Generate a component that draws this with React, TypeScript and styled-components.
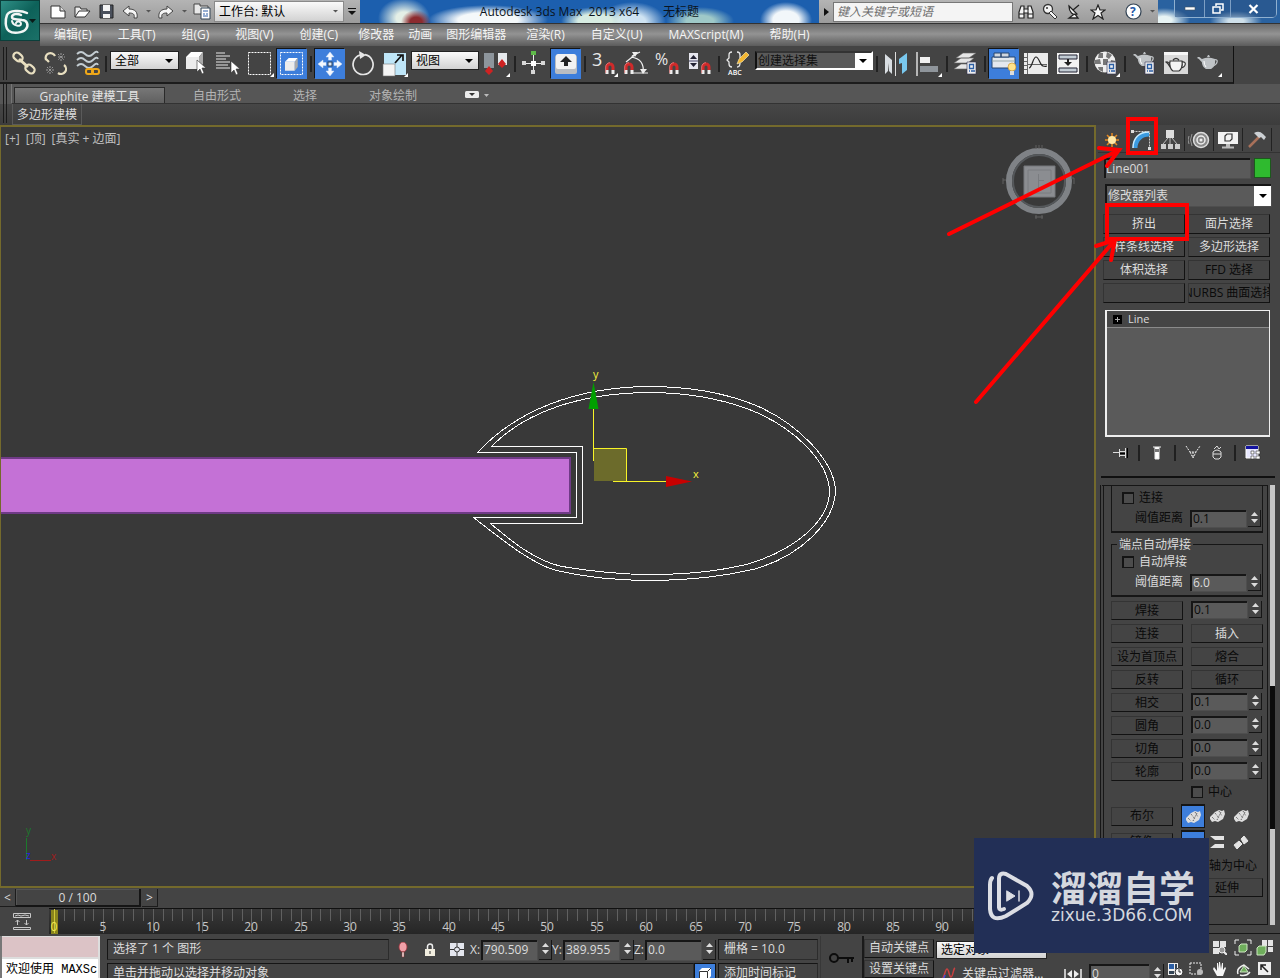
import React, { ReactNode } from "react";
import styled, { createGlobalStyle, css } from "styled-components";

const Global = createGlobalStyle`
  *, *::before, *::after { box-sizing: border-box; }
  body { margin: 0; background: #444; }
  body, button, input, select {
    font-family: "Open Sans", "Noto Sans CJK SC", sans-serif;
    font-size: 12px;
    line-height: 16px;
  }
  button, input, select, fieldset, legend { margin: 0; padding: 0; border: 0; border-radius: 0; min-width: 0; }
  button { background: none; color: inherit; }
  select { appearance: none; background: none; outline: none; }
  svg { display: block; flex: none; }
`;

const INK = "#dcdcdc";
const DIM = "#0a0a0a";
const BLUE = "#3d7edb";

/* ---------- page frame ---------- */

const App = styled.div`
  position: relative;
  display: flex;
  flex-direction: column;
  height: 100vh;
  overflow: hidden;
  background: #444;
  color: ${INK};
  white-space: nowrap;
`;

const Header = styled.header`
  display: flex;
  flex: none;
`;

const AppButton = styled.button`
  flex: none;
  width: 40px;
  height: 41px;
  background: linear-gradient(135deg, #2f8f86, #0d6159 50%, #1b7168);
  border: 1px solid #0b3f3b;
  margin-bottom: -2px;
`;

const HeaderRows = styled.div`
  flex: 1;
  min-width: 0;
`;

const TitleBar = styled.div`
  display: flex;
  align-items: stretch;
  height: 24px;
  border-bottom: 1px solid #333;
`;

const QuickBar = styled.div<{ $pad?: number }>`
  display: flex;
  align-items: center;
  flex: none;
  height: 23px;
  padding-left: ${(p) => p.$pad ?? 0}px;
  background: linear-gradient(#b4b4b4, #9b9b9b);
`;

const QuickButton = styled.button<{ $w?: number }>`
  display: flex;
  align-items: center;
  justify-content: center;
  width: ${(p) => p.$w ?? 24}px;
  height: 22px;
`;

const Picker = styled.label<{ $w: number; $h: number; $flat?: boolean }>`
  display: flex;
  align-items: center;
  flex: none;
  width: ${(p) => p.$w}px;
  height: ${(p) => p.$h}px;
  padding: 0 5px 0 4px;
  color: #000;
  background: linear-gradient(#fafafa, #d2d2d2);
  border: 1px solid ${(p) => (p.$flat ? "#8a8a8a" : "#222")};
  select { flex: 1; height: 100%; color: #000; }
`;

const Caption = styled.div`
  display: flex;
  flex: 1;
  align-items: center;
  justify-content: center;
  gap: 24px;
  color: #0b1420;
  background:
    radial-gradient(ellipse 15px 12px at 56px 22px, #8c2b2f 40%, transparent),
    radial-gradient(ellipse 26px 20px at 44px 18px, #e4efe6 30%, transparent),
    radial-gradient(ellipse 60px 15px at 128px 20px, #f4f8fa 50%, transparent),
    radial-gradient(ellipse 34px 14px at 235px 21px, #d7ece2 50%, transparent),
    radial-gradient(ellipse 34px 20px at 272px 22px, #cfe3f2 40%, transparent),
    radial-gradient(ellipse 34px 14px at 340px 21px, #9fc9c8 40%, transparent),
    radial-gradient(ellipse 26px 18px at 426px 20px, #f2f7fa 50%, transparent),
    #1c5fae;
  span { white-space: pre; }
`;

const SearchBox = styled.input`
  width: 180px;
  height: 20px;
  padding: 0 3px;
  margin-right: 1px;
  background: #f4f4f4;
  border: 1px solid #777;
  font-style: italic;
  &::placeholder { color: #6c6c6c; opacity: 1; }
`;

const WindowArea = styled.div`
  flex: none;
  width: 122px;
  padding-left: 16px;
  background:
    radial-gradient(ellipse 26px 12px at 6px 20px, #e8f4f4 30%, transparent),
    radial-gradient(ellipse 26px 10px at 78px 21px, #cfe0ea 30%, transparent),
    #2a62a0;
`;

const WindowButtons = styled.div`
  display: flex;
  width: 103px;
  height: 18px;
  border: 1px solid #8fb0d0;
  border-top: 0;
  border-radius: 0 0 5px 5px;
`;

const WindowButton = styled.button<{ $w: number }>`
  display: flex;
  align-items: center;
  justify-content: center;
  width: ${(p) => p.$w}px;
  background: rgba(40, 80, 130, 0.5);
  & + & { border-left: 1px solid #7d9fc4; }
`;

const MenuBar = styled.nav`
  display: flex;
  height: 22px;
  padding-left: 1px;
  background: linear-gradient(#6a6a6a, #939393 45%, #5c5c5c);
`;

const MenuItem = styled.button<{ $tight?: boolean }>`
  padding: 0 ${(p) => (p.$tight ? 7 : 13)}px;
  color: #f4f4f4;
`;

/* ---------- main toolbar ---------- */

const Toolbar = styled.div`
  display: flex;
  flex: none;
  align-items: center;
  width: 1234px;
  height: 38px;
  padding-bottom: 1px;
  border-right: 1px solid #111;
  border-bottom: 2px solid #1c1c1c;
`;

const Grip = styled.div<{ $h: number }>`
  flex: none;
  width: 4px;
  height: ${(p) => p.$h}px;
  margin-left: 3px;
  border: solid #1a1a1a;
  border-width: 0 1px;
`;

const Tool = styled.button<{ $on?: boolean }>`
  flex: none;
  width: 30px;
  height: 30px;
  margin: 0 1px;
  ${(p) => p.$on && css`background: ${BLUE}; box-shadow: -1px -1px #151515;`}
  svg { margin: -1px; }
`;

const ToolSep = styled.div`
  flex: none;
  width: 2px;
  height: 16px;
  margin: 0 2px;
  background: #222;
`;

const ToolSlot = styled.div`
  flex: none;
  align-self: flex-start;
  padding: 5px 1px 0;
`;

const SetPicker = styled.label`
  display: flex;
  width: 118px;
  height: 19px;
  border: 2px solid #fff;
  border-top-color: #333;
  border-left-color: #111;
  background: #5a5a5a;
  align-items: center;
  input { width: 98px; height: 15px; padding-left: 1px; background: #5a5a5a; color: #111; }
  input::placeholder { color: #111; opacity: 1; }
  button { flex: 1; height: 15px; background: #fff; display: flex; align-items: center; justify-content: center; }
`;

/* ---------- ribbon ---------- */

const Ribbon = styled.div`
  display: flex;
  flex: none;
  height: 41px;
  background: linear-gradient(#565656 0 20px, #474747 20px, #3c3c3c);
`;

const RibbonBody = styled.div`
  flex: 1;
  margin-left: 4px;
`;

const RibbonTabs = styled.div`
  display: flex;
  height: 20px;
  padding: 3px 0 0 2px;
  border-bottom: 1px solid #333;
  border-left: 1px solid #777;
`;

const RibbonTab = styled.button<{ $w: number; $on?: boolean }>`
  width: ${(p) => p.$w}px;
  padding-top: 2px;
  line-height: 14px;
  color: #b4b4b4;
  ${(p) => p.$on && css`
    color: #e4e4e4;
    background: linear-gradient(#777, #606060);
    border: solid #2a2a2a;
    border-width: 1px 1px 0;
  `}
`;

const RibbonMin = styled.button`
  display: flex;
  align-items: center;
  padding-left: 20px;
`;

const RibbonPanelButton = styled.button`
  height: 21px;
  padding: 2px 4px 0;
  border: 1px solid #5a5a5a;
  border-top: 0;
  margin-left: 1px;
`;

/* ---------- work area ---------- */

const Body = styled.div`
  display: flex;
  flex: 1;
  min-height: 0;
`;

const Stage = styled.div`
  display: flex;
  flex: 1;
  flex-direction: column;
  min-width: 0;
`;

const Viewport = styled.main`
  position: relative;
  flex: 1;
  min-height: 0;
  margin-right: 2px;
  background: #393939;
  border: 2px solid #746a2c;
  border-left-width: 1px;
  overflow: hidden;
`;

const Scene = styled.svg`
  width: 100%;
  height: 100%;
  font-family: "Open Sans", sans-serif;
`;

const ViewLabels = styled.div`
  position: absolute;
  top: 4px;
  left: 4px;
  display: flex;
  gap: 6px;
  button { color: #c0c0c0; }
`;

const ViewCube = styled.svg`
  position: absolute;
  top: 12px;
  right: 18px;
`;

const SliderRow = styled.div`
  display: flex;
  flex: none;
  height: 20px;
  padding-top: 1px;
`;

const StepButton = styled.button`
  width: 16px;
  height: 18px;
  border-right: 1px solid #1c1c1c;
  border-bottom: 1px solid #1c1c1c;
`;

const TimeSlider = styled.button`
  width: 125px;
  height: 18px;
  padding-top: 1px;
  margin-right: 1px;
  border: solid #151515;
  border-width: 0 2px 2px 0;
  box-shadow: inset 1px 1px #555;
`;

const TrackRow = styled.div`
  display: flex;
  flex: none;
  height: 26px;
`;

const TrackToggle = styled.button`
  display: flex;
  align-items: center;
  justify-content: center;
  flex: none;
  width: 44px;
  margin-right: 5px;
`;

const Track = styled.div`
  flex: 1;
  min-width: 0;
  border-top: 1px solid #111;
  background: linear-gradient(#383838, #262626);
  overflow: hidden;
  text { font-size: 12px; fill: #c8c8c8; text-anchor: middle; }
`;

/* ---------- command panel ---------- */

const Panel = styled.aside`
  display: flex;
  flex: none;
  flex-direction: column;
  width: 182px;
  border-bottom: 1px solid #161616;
`;

const PanelTabs = styled.div`
  display: flex;
  height: 28px;
  padding-top: 3px;
  border-bottom: 1px solid #333;
`;

const PanelTab = styled.button`
  display: flex;
  align-items: center;
  justify-content: center;
  width: 29px;
  height: 23px;
  border-right: 1px solid #222;
`;

const NameRow = styled.div`
  display: flex;
  gap: 4px;
  padding: 5px 9px 6px 6px;
`;

const sunken = css`
  background: #5a5a5a;
  border: solid #161616;
  border-width: 2px 0 0 2px;
  box-shadow: 1px 1px #4e4e4e;
`;

const NameInput = styled.input`
  ${sunken}
  flex: 1;
  height: 20px;
  padding-bottom: 2px;
  color: ${INK};
`;

const Swatch = styled.button`
  width: 17px;
  height: 20px;
  background: #2fba2f;
  border: 1px solid #1c5a1c;
`;

const ModifierPicker = styled.label`
  ${sunken}
  display: flex;
  align-items: center;
  height: 22px;
  margin: 0 9px 8px 7px;
  select { flex: 1; height: 20px; padding-left: 1px; color: ${INK}; }
  span { display: flex; align-items: center; justify-content: center; width: 17px; height: 20px; background: #fff; }
`;

const ModifierGrid = styled.div`
  display: grid;
  grid-template-columns: 1fr 1fr;
  gap: 3px;
  margin: 0 10px 7px 5px;
`;

const PlateButton = styled.button<{ $h?: number; $dim?: boolean; $w?: number }>`
  display: flex;
  align-items: center;
  justify-content: center;
  width: ${(p) => (p.$w ? p.$w + "px" : "auto")};
  height: ${(p) => p.$h ?? 19}px;
  overflow: hidden;
  color: ${(p) => (p.$dim ? DIM : INK)};
  border: 1px solid #343434;
  border-right-color: #121212;
  border-bottom-color: #121212;
`;

const StackList = styled.div`
  flex: none;
  height: 127px;
  margin: 0 10px 0 7px;
  border: 2px solid #eee;
  border-width: 1px 1px 2px 2px;
  background: #5a5a5a;
`;

const StackItem = styled.button`
  display: flex;
  align-items: center;
  gap: 6px;
  width: 100%;
  height: 17px;
  padding-left: 6px;
  font-size: 11px;
  background: #454545;
  border-bottom: 1px solid #8a8a8a;
`;

const StackTools = styled.div`
  display: flex;
  align-items: center;
  height: 31px;
  padding-left: 11px;
`;

const StackTool = styled.button`
  display: flex;
  align-items: center;
  justify-content: center;
  width: 24px;
  height: 20px;
`;

const StackSep = styled.div`
  width: 2px;
  height: 16px;
  margin: 0 5px;
  background: #202020;
`;

const PanelRule = styled.div`
  flex: none;
  height: 2px;
  margin: 8px 5px 7px 3px;
  background: #101010;
`;

const RollupArea = styled.div`
  display: flex;
  flex: 1;
  gap: 2px;
  min-height: 0;
  margin: 0 5px 8px 2px;
`;

const Rollup = styled.div`
  flex: 1;
  overflow: hidden;
  border: 1px solid #161616;
  border-left: 4px double #161616;
  padding: 0 4px 0 7px;
`;

const ScrollTrack = styled.div`
  display: flex;
  flex-direction: column;
  width: 5px;
  background: #c8c8c8;
  padding-top: 201px;
  &::after { content: ""; height: 143px; background: #0c0c0c; }
`;

const Scrolled = styled.div`
  display: flex;
  flex-direction: column;
  gap: 4px;
  margin-top: -13px;
`;

const Group = styled.fieldset`
  height: 60px;
  padding: 1px 1px 3px 10px;
  border: 1px solid #161616;
  border-bottom-width: 2px;
`;

const GroupTitle = styled.legend<{ $dim?: boolean }>`
  height: 14px;
  line-height: 16px;
  padding: 0 2px;
  margin-left: -5px;
  color: ${(p) => (p.$dim ? DIM : INK)};
`;

const Check = styled.label<{ $dim?: boolean }>`
  display: flex;
  align-items: center;
  gap: 5px;
  height: 20px;
  color: ${(p) => (p.$dim ? DIM : INK)};
  input {
    appearance: none;
    width: 12px;
    height: 12px;
    border: solid #141414;
    border-width: 2px 1px 1px 2px;
    background: #4c4c4c;
  }
`;

const AxisCaption = styled.div`
  height: 20px;
  padding: 2px 0 0 86px;
  color: ${DIM};
`;

const DistanceRow = styled.div<{ $dim?: boolean }>`
  display: flex;
  align-items: center;
  justify-content: flex-end;
  gap: 7px;
  height: 20px;
  color: ${(p) => (p.$dim ? DIM : INK)};
`;

const Pair = styled.div`
  display: grid;
  grid-template-columns: 72px 72px;
  gap: 8px;
  color: ${DIM};
`;

const Lower = styled.div`
  display: flex;
  flex-direction: column;
  gap: 2px;
  margin-top: -3px;
`;

const Indent = styled.div`
  padding-left: 80px;
`;

const IconRow = styled.div`
  display: flex;
  align-items: center;
  height: 24px;
`;

const ShapeButton = styled.button<{ $on?: boolean }>`
  display: flex;
  align-items: center;
  justify-content: center;
  width: 24px;
  height: 24px;
  ${(p) => p.$on && css`margin-left: 8px; background: ${BLUE}; border: solid #151515; border-width: 2px 1px 1px;`}
`;

const Field = styled.span<{ $w: number; $h: number }>`
  display: flex;
  gap: 2px;
  height: ${(p) => p.$h}px;
  input { ${sunken} width: ${(p) => p.$w}px; height: 100%; padding: 0 0 2px 1px; color: inherit; }
`;

const Arrows = styled.span`
  display: flex;
  flex-direction: column;
  justify-content: center;
  gap: 2px;
  width: 13px;
  height: 100%;
  border: solid #161616;
  border-width: 0 1px 1px 0;
  button { display: flex; justify-content: center; height: 5px; }
`;

/* ---------- status bar ---------- */

const Status = styled.footer`
  display: flex;
  flex: none;
  height: 44px;
  overflow: hidden;
  padding-top: 2px;
`;

const Listener = styled.div`
  flex: none;
  width: 100px;
  height: 46px;
  border-left: 2px solid #777;
  border-right: 2px solid #ddd;
  font-family: "Liberation Mono", "Noto Sans CJK SC", monospace;
  div { height: 23px; border: solid #ddd; border-width: 1px 0 2px; background: #dcc3c6; }
  p { margin: 0; height: 23px; padding: 3px 4px 0; background: #fff; color: #000; overflow: hidden; }
`;

const StatusCol = styled.div<{ $w?: number; $ml?: number }>`
  display: flex;
  flex-direction: column;
  flex: ${(p) => (p.$w ? "none" : 1)};
  gap: 3px;
  width: ${(p) => (p.$w ? p.$w + "px" : "auto")};
  margin-left: ${(p) => p.$ml ?? 3}px;
  padding-top: 3px;
`;

const StatusRow = styled.div<{ $end?: boolean }>`
  display: flex;
  flex: none;
  align-items: center;
  justify-content: ${(p) => (p.$end ? "flex-end" : "flex-start")};
  height: 21px;
`;

const StatusBox = styled.div`
  flex: 1;
  height: 21px;
  padding: 1px 5px;
  border: 1px solid #2c2c2c;
  border-top-color: #151515;
  border-left-color: #151515;
`;

const StatusIcon = styled.button<{ $w: number; $on?: boolean }>`
  display: flex;
  align-items: center;
  justify-content: center;
  flex: none;
  width: ${(p) => p.$w}px;
  height: 21px;
  ${(p) => p.$on && css`background: ${BLUE}; border: 1px solid #111;`}
`;

const Axis = styled.label`
  display: flex;
  align-items: center;
  justify-content: space-between;
  width: 82px;
`;

const KeyButton = styled.button`
  display: flex;
  align-items: center;
  justify-content: center;
  flex: none;
  width: 44px;
  height: 44px;
  margin-left: 2px;
  border-right: 2px solid #1a1a1a;
  border-left: 1px solid #383838;
`;

const KeyModes = styled.div`
  display: flex;
  flex-direction: column;
  flex: none;
  gap: 2px;
  width: 72px;
  padding: 3px 2px 0 0;
`;

const NavTools = styled.div`
  display: grid;
  grid-template-columns: 20px 20px 26px 22px 22px;
  grid-auto-rows: 22px;
  place-items: center;
  flex: none;
  width: 116px;
  padding-left: 2px;
`;

/* ---------- overlays ---------- */

const Markup = styled.svg`
  position: absolute;
  top: 110px;
  right: 0;
  pointer-events: none;
`;

const Watermark = styled.div`
  position: absolute;
  right: 71px;
  bottom: 25px;
  display: flex;
  align-items: center;
  gap: 16px;
  width: 235px;
  height: 115px;
  padding-left: 13px;
  background: #222f56;
  color: #d4d7de;
`;

const Brand = styled.div`
  font-size: 36px;
  line-height: 38px;
  font-weight: 700;
  font-family: "Noto Sans CJK SC", sans-serif;
`;

const Site = styled.div`
  font: 17px/20px "DejaVu Sans", sans-serif;
`;

/* ---------- drawings ---------- */

const Down = ({ c = "#000", s = 8 }: { c?: string; s?: number }) => (
  <svg width={s} height={s / 2} viewBox="0 0 8 4"><path d="M0 0h8L4 4z" fill={c} /></svg>
);

const Flyout = () => <path d="M30 25v4h-4z" fill="#fff" />;
const Cursor = ({ x, y }: { x: number; y: number }) => (
  <path transform={`translate(${x} ${y})`} d="M0 0v12l3-3 2 5 2-1-2-5h4z" fill="#fff" stroke="#333" strokeWidth=".6" />
);
const Magnet = ({ x = 14, y = 14 }: { x?: number; y?: number }) => (
  <g transform={`translate(${x} ${y})`} fill="none" strokeWidth="3">
    <path d="M2 8V5a3 3 0 0 1 6 0v3" stroke="#d02a2a" />
    <path d="M2 8v4M8 8v4" stroke="#eee" />
    <path d="M.7 11V5a4.300 4.300 0 0 1 4.300-4.300" stroke="#f08080" strokeWidth=".8" />
  </g>
);
const Teapot = ({ x, y, c = "#bfc3c6" }: { x: number; y: number; c?: string }) => (
  <g transform={`translate(${x} ${y})`}>
    <path d="M5 5c-1 6 2 9 4 10h5c2-1 5-4 4-10z" fill={c} />
    <path d="M5 8C4 8 3 5 0 4l1-1c3 0 3 2 5 3zM5 5q6-3 13 0M10 3h3l-1-2h-1z" fill={c} />
    <path d="M17 6c5-2 4 5-2 6" fill="none" stroke={c} strokeWidth="1.300" />
    <path d="M7 7q0 4 2 6" stroke="#fff" fill="none" />
  </g>
);
const Sheet = ({ x, y }: { x: number; y: number }) => (
  <g transform={`translate(${x} ${y})`}>
    <path d="M0 0h9v12H0z" fill="#eee" stroke="#335" strokeWidth=".6" />
    <path d="M2.500 2.500h4v4h-4zM2 9h1M4 9h4" stroke="#2c5fa6" strokeWidth="1.300" fill="none" />
  </g>
);
const Cube = ({ x, y, s = 1 }: { x: number; y: number; s?: number }) => (
  <g transform={`translate(${x} ${y}) scale(${s})`}>
    <path d="M0 5l5-5h12l-4 5z" fill="#fff" />
    <path d="M0 5h13v12H0z" fill="#ececec" />
    <path d="M13 5l4-5v12l-4 5z" fill="#aaa" />
  </g>
);

const Icon = ({ children }: { children: ReactNode }) => (
  <svg width="32" height="32" viewBox="0 0 32 32" fill="none">{children}</svg>
);

const icons: Record<string, ReactNode> = {
  link: <g stroke="#e8dfc0" strokeWidth="2.200"><rect x="6" y="5.500" width="10" height="7" rx="3.500" transform="rotate(40 11 9)" /><rect x="18" y="17.500" width="10" height="7" rx="3.500" transform="rotate(40 23 21)" /><path d="M12 11l9 8" strokeWidth="3" /></g>,
  unlink: <><g stroke="#e8dfc0" strokeWidth="2.200"><path d="M7 12a4.500 4.500 0 1 1 9-4M7 11l3 3" /><path d="M25 17a4.500 4.500 0 1 1-6 8" /></g><path d="M19 6l6 6M25 6l-6 6M19 9h7M22 5v8M8 19l6 6M14 19l-6 6M7 22h8M11 18v8" stroke="#9a9a9a" strokeDasharray="2 1" /></>,
  bind: <><path d="M6 6q4-4 8 0t8 0 5-1M6 12q4-4 8 0t8 0 5-1M6 18q4-4 8 0t8 0 5-1" stroke="#c4cdd2" strokeWidth="1.800" /><g stroke="#f0a818" strokeWidth="2"><rect x="15" y="21" width="7" height="5" rx="2" /><rect x="21" y="21" width="7" height="5" rx="2" /></g></>,
  pick: <><Cube x={6} y={4} /><Cursor x={17} y={12} /></>,
  list: <><path d="M4 5h9M4 8h14M4 11h10M4 14h14M4 17h12M4 20h14" stroke="#e8e8e8" strokeWidth="1.200" /><Cursor x={19} y={13} /></>,
  region: <><rect x="4.500" y="4.500" width="22" height="22" stroke="#fff" strokeDasharray="2 1" /><Flyout /></>,
  window: <><rect x="4.500" y="4.500" width="22" height="22" stroke="#fff" strokeDasharray="2 1" /><Cube x={9} y={10} s={0.75} /></>,
  move: <><path d="M16 4l4 5h-2.500v3h-3V9H12zM16 28l4-5h-2.500v-3h-3v3H12zM4 16l5-4v2.500h3v3H9V20zM28 16l-5-4v2.500h-3v3h3V20z" fill="#f4f8ff" stroke="#cfe0f6" strokeWidth=".5" /><rect x="14" y="14" width="4" height="4" fill="#dfe8f4" stroke="#28415f" /></>,
  rotate: <><path d="M14 7a10 10 0 1 0 5-.3" stroke="#e6e6e6" strokeWidth="1.700" /><path d="M13 3l7 4-6 4z" fill="#e6e6e6" /></>,
  scale: <><path d="M6 5h22v22H6z" fill="#bfe6f8" /><path d="M5 16h12v12H5z" fill="#f4f4f4" stroke="#777" strokeWidth=".6" /><path d="M17 15l7-8M19 7h6v6" stroke="#111" strokeWidth="1.700" /><Flyout /></>,
  pivot: <><path d="M4 5h10v15H4z" fill="#8d959c" /><path d="M18 5h9v12h-9z" fill="#e6e9ec" /><path d="M9 18l4 5-4 4-4-4zM22 11l4 5-4 4-4-4z" fill="#cf2222" /><path d="M18 5h9v6h-9z" fill="#e6e9ec" /><Flyout /></>,
  manip: <><path d="M15.500 5v21M5 15.500h21" stroke="#eee" /><path d="M13 3h5v4h-5z" fill="#5fb94a" /><path d="M13 22h4v4h-4zM4 13h4v4H4zM23 13h4v4h-4z" fill="#d8d8d8" /><path d="M13 13h5v5h-5z" fill="#fff" /></>,
  keyboard: <><rect x="5" y="7" width="22" height="19" rx="2" fill="#b9bdc2" /><rect x="6" y="6" width="20" height="15" rx="2" fill="#f2f2f2" /><path d="M16 8l6 6h-4v4h-4v-4h-4z" fill="#222" /></>,
  snap3: <><text x="4" y="18" fontSize="18" fill="#e8e8e8">3</text><Magnet x={17} y={14} /><Flyout /></>,
  angle: <><path d="M6 14L16 6M11 9q14 2 12 16M12 25h16M20 4l-8 4" stroke="#eee" strokeWidth="1.200" /><path d="M20 21h7l-4 5zM12 4l6 0-3 5z" fill="#eee" /><Magnet x={4} y={14} /></>,
  percent: <><text x="3" y="17" fontSize="16" fill="#e8e8e8">%</text><Magnet x={17} y={14} /></>,
  spin: <><path d="M5 5h9v16H5z" fill="#e6e6ee" /><path d="M6 11l3.500-4L13 11zM6 15l3.500 4 3.500-4z" fill="#223" /><path d="M5 13h9" stroke="#446" /><Magnet x={17} y={14} /></>,
  named: <><path d="M10 4q-3 0-3 3v3l-2 2 2 2v2q0 3 3 3M15 4q3 0 3 3v3M15 19q3 0 3-4" stroke="#e8e8e8" strokeWidth="1.300" /><path d="M15 16l2-5 7-7 3 3-7 7z" fill="#f2b632" stroke="#fff0c0" strokeWidth=".6" /><text x="6" y="27" fontSize="7" fontWeight="600" fill="#fff">ABC</text></>,
  mirror: <><path d="M5 6l7 6v14l-3-3v-8l-1 8-3 3z" fill="#d9dee2" /><path d="M27 5l-8 6v5l3-1v11l5-4z" fill="#79c8ee" /><path d="M15.500 4v24" stroke="#ddd" /></>,
  align: <><path d="M5 4v24" stroke="#ddd" strokeWidth="1.500" /><path d="M8 9h10v6H8z" fill="#f0f0f0" /><path d="M8 18h18v6H8z" fill="#8f959b" /><Flyout /></>,
  layers: <><path d="M4 21l7-5h13l-6 5zM4 15l7-5h13l-6 5zM6 10l7-5h13l-7 5z" fill="#e6e6e6" stroke="#666" strokeWidth=".6" /><Sheet x={17} y={14} /></>,
  ribbon: <><path d="M4 9h23v11H4z" fill="#e3e8ee" stroke="#27446f" /><path d="M6 5h7v4H6zM13 5h8v4h-8z" fill="#cfd6df" stroke="#27446f" /><path d="M4 13h23" stroke="#9aa" /><circle cx="24" cy="19" r="4" fill="#ffe28a" stroke="#c98a1a" strokeWidth=".6" /><path d="M22 23h4v4h-4z" fill="#ddd" /></>,
  curve: <><path d="M4 5h24v21H4z" fill="#ececec" /><path d="M7.500 5v21M4 9.500h3M4 13.500h3M4 17.500h3M4 21.500h3M8 16.500h19" stroke="#666" /><path d="M9 20c3 0 4-11 7-11s4 8 7 9 3 0 4 0" stroke="#222" strokeWidth="1.200" /></>,
  schematic: <><path d="M5 5h22v21H5z" fill="#f2f2f2" /><path d="M7 7h18v4H7zM7 20h18v4H7z" stroke="#223" fill="#c2ccd4" /><path d="M16 11v5" stroke="#222" strokeWidth="2" /><path d="M12 14h8l-4 4z" fill="#222" /></>,
  material: <><circle cx="15" cy="14" r="10.500" fill="#efefef" /><path d="M9 5h4v5H8zM17 4l5 3-3 4-3-2zM5 12l5-1 1 5H5zM13 11l5 0 0 6h-5zM21 12l5 1-1 5-5-1zM8 19h5v5l-4-2zM17 19l4 0-1 5h-3z" fill="#777" /><Sheet x={17} y={14} /><Flyout /></>,
  setup: <><Teapot x={5} y={3} /><Sheet x={17} y={14} /></>,
  frame: <><path d="M4 4h24v22H4z" fill="#d9d9d9" /><path d="M4 4h24v3H4z" fill="#f6f6f6" /><g stroke="#333" strokeWidth="1.200" fill="#f4f4f4"><path d="M10 13c-1 5 1 9 3 10h6c2-1 4-5 3-10zM10 16q-2-3-4-2 2 1 4 5M22 14c5-1 4 5-1 6M13 12q3-3 6 0" /></g></>,
  render: <><Teapot x={5} y={6} /><Flyout /></>,
};

const T = ({ n, label, on }: { n: string; label: string; on?: boolean }) => (
  <Tool $on={on} aria-label={label}><Icon>{icons[n]}</Icon></Tool>
);

const Num = ({ label, value, w = 56, h = 17 }: { label: string; value: string; w?: number; h?: number }) => (
  <Field $w={w} $h={h}>
    <input aria-label={label} defaultValue={value} />
    <Arrows>
      <button aria-label={`${label} +`}><svg width="7" height="4"><path d="M0 4h7L3.500 0z" fill="#ddd" /></svg></button>
      <button aria-label={`${label} -`}><svg width="7" height="4"><path d="M0 0h7L3.500 4z" fill="#ddd" /></svg></button>
    </Arrows>
  </Field>
);

const Union = () => (
  <svg width="18" height="16" viewBox="0 0 18 16"><path d="M2 9l5-5 4-2 3 1 2-1 1 4-2 5-5 3-3-1-3 1-2-3z" fill="#dedede" /><path d="M4 9l3 3M7 5l4 5M11 3l3 5M9 12l4-8" stroke="#555" strokeDasharray="1 1" /></svg>
);

const menus = ["编辑(E)", "工具(T)", "组(G)", "视图(V)", "创建(C)", "修改器", "动画", "图形编辑器", "渲染(R)", "自定义(U)", "MAXScript(M)", "帮助(H)"];
const tightMenus = ["修改器", "动画", "图形编辑器"];
const modifiers: [string, boolean][] = [
  ["挤出", false], ["面片选择", false], ["样条线选择", false], ["多边形选择", false],
  ["体积选择", false], ["FFD 选择", true], ["", true], ["NURBS 曲面选择", true],
];
const frameX = (f: number) => 5 + Math.round(f * 9.87);

const HeaderBar = () => (
  <Header>
    <AppButton aria-label="应用程序">
      <svg width="38" height="38" viewBox="0 0 38 38" fill="none">
        <path d="M26 11c-6-3-18-3-20 2s-2 13 2 16 14 2 17-2 1-9-4-9c-6-1-10 0-10-3s5-4 9-2" stroke="#f2f6f5" strokeWidth="2.500" strokeLinecap="round" />
        <path d="M11 19c1 5 9 6 9 3s-4-3-5-1" stroke="#f2f6f5" strokeWidth="2" strokeLinecap="round" />
        <path d="M28 17h7l-3.500 4z" fill="#0a1a18" />
      </svg>
    </AppButton>
    <HeaderRows>
      <TitleBar>
        <QuickBar $pad={6}>
          <QuickButton aria-label="新建"><svg width="17" height="14"><path d="M1 1h9l5 5v7H1z" fill="#fff" stroke="#333" /><path d="M10 1v5h5" fill="#ddd" stroke="#333" /></svg></QuickButton>
          <QuickButton aria-label="打开"><svg width="18" height="14"><path d="M2 12V2h5l1 2h6v3" fill="#eee" stroke="#333" /><path d="M2 12l4-6h11l-5 6z" fill="#fff" stroke="#333" /></svg></QuickButton>
          <QuickButton aria-label="保存"><svg width="15" height="15"><path d="M1 1h13v13H1z" fill="#4a505c" stroke="#222" /><path d="M4 1h7v6H4zM4 10h7v4H4z" fill="#f4f4f4" /></svg></QuickButton>
          <QuickButton aria-label="撤消"><svg width="17" height="14"><path d="M1 6l6-5v3c6 0 9 3 8 9h-3c1-4-1-5-5-5v3z" fill="#f6f6f6" stroke="#444" /></svg></QuickButton>
          <QuickButton $w={12} aria-label="撤消列表"><Down c="#555" s={5} /></QuickButton>
          <QuickButton aria-label="重做"><svg width="17" height="14"><path d="M15 6L9 1v3C3 4 0 7 1 13h3c-1-4 1-5 5-5v3z" fill="#f6f6f6" stroke="#444" /></svg></QuickButton>
          <QuickButton $w={12} aria-label="重做列表"><Down c="#555" s={5} /></QuickButton>
          <QuickButton aria-label="项目文件夹"><svg width="18" height="17"><path d="M1 1h6v2h8v8H1z" fill="#e8e8e8" stroke="#444" /><path d="M8 5h9v11H8z" fill="#fff" stroke="#345" /><path d="M10 8h5M10 11h2M13 11h2M10 13h5" stroke="#2c5fa6" /></svg></QuickButton>
          <Picker $w={130} $h={21} $flat>
            <select aria-label="工作台"><option>工作台: 默认</option></select><Down c="#555" s={5} />
          </Picker>
          <QuickButton $w={16} aria-label="自定义工具栏"><svg width="8" height="7"><path d="M0 0h8v1H0zM0 3h8L4 7z" fill="#111" /></svg></QuickButton>
        </QuickBar>
        <Caption><span>Autodesk 3ds Max  2013 x64</span><span>无标题</span></Caption>
        <QuickBar>
          <QuickButton $w={14} aria-label="展开"><svg width="5" height="8"><path d="M0 0v8l5-4z" fill="#111" /></svg></QuickButton>
          <SearchBox aria-label="搜索" placeholder="键入关键字或短语" />
          <QuickButton aria-label="查找"><svg width="16" height="16"><path d="M3 2h3v3h4V2h3l2 6v6h-5V9H6v5H1V8z" fill="#f4f4f4" stroke="#222" strokeWidth="1.200" /><path d="M1 10h5M10 10h5M6 5v4M10 5v4" stroke="#222" /></svg></QuickButton>
          <QuickButton aria-label="密钥"><svg width="17" height="17"><circle cx="6" cy="6" r="4.500" fill="#f4f4f4" stroke="#333" strokeWidth="1.300" /><path d="M9 8l6 6-2 2-6-6z" fill="#f4f4f4" stroke="#333" /><circle cx="5" cy="5" r="1" fill="#333" /></svg></QuickButton>
          <QuickButton aria-label="通讯"><svg width="15" height="17"><path d="M2 3l8 8c-4 2-8-2-8-8z" fill="#f4f4f4" stroke="#222" strokeWidth="1.300" /><path d="M6 7l6-5M2 15h9l-3-4-2 1z" fill="#f4f4f4" stroke="#222" strokeWidth="1.300" /></svg></QuickButton>
          <QuickButton aria-label="收藏"><svg width="16" height="16"><path d="M8 1l2 5h5l-4 3 2 6-5-3.500L3 15l2-6-4-3h5z" fill="#fafafa" stroke="#222" strokeWidth="1.200" /></svg></QuickButton>
          <QuickButton $w={36} aria-label="帮助"><svg width="17" height="17" style={{ marginLeft: 10 }}><circle cx="8.500" cy="8.500" r="7.500" fill="#fff" stroke="#345" strokeWidth="1.200" /><text x="5" y="13" fontSize="12" fontWeight="700" fill="#2458a8">?</text></svg></QuickButton>
          <QuickButton $w={12} aria-label="帮助列表"><Down c="#555" s={5} /></QuickButton>
        </QuickBar>
        <WindowArea>
          <WindowButtons>
            <WindowButton $w={29} aria-label="最小化"><svg width="12" height="5"><path d="M1 1h10v3H1z" fill="#fff" stroke="#456" strokeWidth=".6" /></svg></WindowButton>
            <WindowButton $w={26} aria-label="还原"><svg width="12" height="11" fill="none" stroke="#fff" strokeWidth="1.500"><path d="M4 3V1h7v6H9" /><path d="M1 4h7v6H1z" /></svg></WindowButton>
            <WindowButton $w={46} aria-label="关闭"><svg width="11" height="10"><path d="M1.500 1l8 8M9.500 1l-8 8" stroke="#fff" strokeWidth="2.200" /></svg></WindowButton>
          </WindowButtons>
        </WindowArea>
      </TitleBar>
      <MenuBar>
        {menus.map((m) => <MenuItem key={m} $tight={tightMenus.includes(m)}>{m}</MenuItem>)}
      </MenuBar>
    </HeaderRows>
  </Header>
);

const MainToolbar = () => (
  <Toolbar>
    <Grip $h={33} />
    <T n="link" label="选择并链接" /><T n="unlink" label="取消链接" /><T n="bind" label="绑定到空间扭曲" />
    <ToolSep />
    <ToolSlot><Picker $w={69} $h={19}><select aria-label="选择过滤器"><option>全部</option></select><Down /></Picker></ToolSlot>
    <T n="pick" label="选择对象" /><T n="list" label="按名称选择" /><T n="region" label="矩形选择区域" /><T n="window" label="窗口/交叉" on />
    <ToolSep />
    <T n="move" label="选择并移动" on /><T n="rotate" label="选择并旋转" /><T n="scale" label="选择并缩放" />
    <ToolSlot><Picker $w={68} $h={19}><select aria-label="参考坐标系"><option>视图</option></select><Down /></Picker></ToolSlot>
    <T n="pivot" label="使用轴点中心" />
    <ToolSep />
    <T n="manip" label="选择并操纵" /><T n="keyboard" label="键盘快捷键覆盖" on />
    <ToolSep />
    <T n="snap3" label="捕捉开关" /><T n="angle" label="角度捕捉" /><T n="percent" label="百分比捕捉" /><T n="spin" label="微调器捕捉" />
    <ToolSep />
    <T n="named" label="编辑命名选择集" />
    <ToolSlot><SetPicker><input aria-label="命名选择集" placeholder="创建选择集" /><button aria-label="选择集列表"><Down /></button></SetPicker></ToolSlot>
    <ToolSep />
    <T n="mirror" label="镜像" /><T n="align" label="对齐" />
    <ToolSep />
    <T n="layers" label="层管理器" />
    <ToolSep />
    <T n="ribbon" label="石墨建模工具" on /><T n="curve" label="曲线编辑器" /><T n="schematic" label="图解视图" />
    <ToolSep />
    <T n="material" label="材质编辑器" />
    <ToolSep />
    <T n="setup" label="渲染设置" /><T n="frame" label="渲染帧窗口" /><T n="render" label="渲染产品" />
  </Toolbar>
);

const ViewportArea = () => (
  <Viewport>
    <Scene>
      <g transform="translate(-1 -127)">
        <rect x="-4" y="458" width="574" height="55" fill="#c471d6" stroke="#6f3a86" strokeWidth="2" />
        <g fill="none" stroke="#fff" shapeRendering="crispEdges">
          <path d="M477.500 452.500H576.500V517.500H473.500C500 538 530 563 556 570.500C585 577 620 580.500 650 580.500C690 580.500 725 576 755 569C800 556 835 523 835.500 490C834 462 800 424 755 405C720 391 685 386.500 649 386.500C575 387 516 411 477.500 452.500Z" />
          <path d="M491.500 446.500H582.500V523.500H490.500C510 540 535 561 562 566.500C590 571 620 574.500 650 574.500C690 574.500 720 571 748 564C795 550 830 521 829.500 490C828 462 795 427 748 409C715 397 685 392.500 649 392.500C580 393 525 412 491.500 446.500Z" />
        </g>
        <rect x="594" y="449" width="32" height="32" fill="#6c6b2b" />
        <path d="M593.500 461V409M594 448.500h32.500V481M613 481.500h53" stroke="#f8f428" fill="none" />
        <path d="M593.500 382l5 27h-10z" fill="#00a000" />
        <path d="M692 481.500l-26-5.500v11z" fill="#c80000" />
        <text x="593" y="378" fontSize="11" fill="#f4f03c">y</text>
        <text x="693" y="478" fontSize="11" fill="#f4f03c">x</text>
        <path d="M26.500 838v22" stroke="#1c7a2c" />
        <path d="M30 860.500h21" stroke="#a01c1c" />
        <text x="26" y="834" fontSize="10" fill="#1c7a2c">y</text>
        <text x="51" y="860" fontSize="10" fill="#a01c1c">x</text>
        <text x="26" y="859" fontSize="10" fill="#2626e0">z</text>
      </g>
    </Scene>
    <ViewLabels><button>[+]</button><button>[顶]</button><button>[真实 + 边面]</button></ViewLabels>
    <ViewCube width="76" height="82" viewBox="0 0 76 82">
      <circle cx="39" cy="42" r="30" fill="none" stroke="#7f8286" strokeWidth="6" />
      <circle cx="39" cy="42" r="26" fill="none" stroke="#55585b" strokeWidth="2" />
      <path d="M24 27h31v31H24z" fill="#8b8d91" stroke="#77797c" />
      <path d="M38.500 35v14M39 41.500h5M28 31h23v23H28z" fill="none" stroke="#7a7c80" />
      <g stroke="#606060" fill="none"><path d="M36 6v4M39 6v4M42 6v4M35 78h8M36 76v4M42 76v4M3 39v6M3 41h3M71 39h3v6" /></g>
    </ViewCube>
  </Viewport>
);

const TimeArea = () => (
  <>
    <SliderRow>
      <StepButton aria-label="上一帧">&lt;</StepButton>
      <TimeSlider>0 / 100</TimeSlider>
      <StepButton aria-label="下一帧">&gt;</StepButton>
    </SliderRow>
    <TrackRow>
      <TrackToggle aria-label="迷你曲线编辑器">
        <svg width="18" height="17" fill="none" stroke="#c8c8c8"><path d="M.5.500h17v4H.5zM2 3l3-1 3 1 4-1 4 1M.5 14.500h17v2H.5zM4.500 12V7M2.500 9l2-2 2 2M13.500 7v5M11.500 10l2 2 2-2" /></svg>
      </TrackToggle>
      <Track>
        <svg width="100%" height="25">
          <rect x="2" y="1" width="7" height="24" fill="#8a851c" />
          {Array.from({ length: 101 }, (_, f) => (
            <path key={f} d={`M${frameX(f) + 0.5} 0v${f % 5 ? 12 : 24}`} stroke={f ? "#606060" : "#d0c838"} />
          ))}
          {Array.from({ length: 21 }, (_, i) => (
            <text key={i} x={frameX(i * 5)} y="22" style={i ? undefined : { fill: "#f0e850" }}>{i * 5}</text>
          ))}
        </svg>
      </Track>
    </TrackRow>
  </>
);

const spinRows: [string, string][] = [["相交", "0.1"], ["圆角", "0.0"], ["切角", "0.0"], ["轮廓", "0.0"]];

const CommandPanel = () => (
  <Panel>
    <PanelTabs>
      <PanelTab aria-label="创建"><svg width="18" height="18"><path d="M9 2v14M2 9h14M4 4l10 10M14 4L4 14" stroke="#e88a20" strokeWidth="1.500" /><circle cx="9" cy="9" r="4" fill="#ffe9a8" /></svg></PanelTab>
      <PanelTab aria-label="修改"><svg width="20" height="20" fill="none"><path d="M4 18C4 10 10 4 18 4" stroke="#3b9be0" strokeWidth="5" /><path d="M2 18C2 8 8 2 18 2" stroke="#c8ecff" strokeWidth="1.500" /><path d="M1.500 1.500h17v17" stroke="#ccc" strokeDasharray="2 1" /><path d="M0 0h3v3H0zM17 17h3v3h-3z" fill="#ddd" /></svg></PanelTab>
      <PanelTab aria-label="层次"><svg width="20" height="19"><path d="M6 0h8v8H6z" fill="#ddd" /><path d="M10 8v6M3 14l5-6M17 14l-5-6" stroke="#bbb" /><path d="M1 14h5v5H1zM8 14h5v5H8zM15 14h5v5h-5z" fill="#ccc" /></svg></PanelTab>
      <PanelTab aria-label="运动"><svg width="22" height="18" fill="none"><circle cx="13" cy="9" r="7.500" fill="#888" stroke="#ddd" strokeWidth="1.500" /><circle cx="13" cy="9" r="4" stroke="#eee" strokeWidth="1.500" /><circle cx="13" cy="9" r="1.500" fill="#eee" /><path d="M4 3q-3 6 0 12M1 5q-2 4 0 8" stroke="#999" /></svg></PanelTab>
      <PanelTab aria-label="显示"><svg width="20" height="18"><path d="M0 1h20v12H0z" fill="#f2f2f2" /><path d="M4 16.500h12" stroke="#bbb" strokeWidth="2" /><path d="M10 13v3" stroke="#bbb" strokeWidth="4" /><path d="M7 5l2-2h5v5l-2 2H7z" fill="none" stroke="#333" strokeWidth="1.200" /></svg></PanelTab>
      <PanelTab aria-label="工具"><svg width="20" height="18"><path d="M2 16L13 5" stroke="#a8715a" strokeWidth="2.500" /><path d="M7 2q5-3 9 1l3 3-2 3-3-3-2 1-2-2q-2-2-3-3z" fill="#ccd0d4" /></svg></PanelTab>
    </PanelTabs>
    <NameRow><NameInput aria-label="对象名称" defaultValue="Line001" /><Swatch aria-label="对象颜色" /></NameRow>
    <ModifierPicker><select aria-label="修改器列表"><option>修改器列表</option></select><span><Down /></span></ModifierPicker>
    <ModifierGrid>
      {modifiers.map(([m, dim], i) => <PlateButton key={i} $h={20} $dim={dim} aria-label={m || "空"}>{m}</PlateButton>)}
    </ModifierGrid>
    <StackList>
      <StackItem><svg width="9" height="9"><path d="M0 0h9v9H0z" fill="#000" /><path d="M2 4.500h5M4.500 2v5" stroke="#aaa" /></svg>Line</StackItem>
    </StackList>
    <StackTools>
      <StackTool aria-label="锁定堆栈"><svg width="16" height="12" fill="none" stroke="#ddd"><path d="M0 5.500h6M6.500 2v8M6 4.500h6M6 8.500h6M12.500 1v10" /><path d="M14.500 1v10M7 6.500h5" stroke="#000" /></svg></StackTool>
      <StackSep />
      <StackTool aria-label="显示最终结果"><svg width="10" height="14"><path d="M1 1h8M3 1v12h4V1" fill="#fff" stroke="#eee" /><path d="M3 3h4v3H3z" fill="#777" /></svg></StackTool>
      <StackSep />
      <StackTool aria-label="使唯一"><svg width="16" height="15" fill="none" stroke="#eee"><path d="M1 1l4 6h6l4-6M5 7l3 6 3-6M8 7v6" strokeDasharray="2 1" /></svg></StackTool>
      <StackTool aria-label="移除修改器"><svg width="12" height="15" fill="none" stroke="#ddd"><path d="M2 7v5l2 2h4l2-2V7q-4-4-8 0zM2 9h8M3 4l3-3 2 3 2-2" /></svg></StackTool>
      <StackSep />
      <StackTool aria-label="配置修改器集"><svg width="16" height="15"><path d="M1 1h12v12H1z" fill="#e8e8ff" stroke="#fff" /><path d="M1 1h12v3H1z" fill="#1414a0" /><path d="M6 6h3v3H6zM11 6h4v3h-4zM6 11h3v3H6zM11 11h4v3h-4z" fill="#fff" stroke="#333" strokeWidth=".6" /></svg></StackTool>
    </StackTools>
    <PanelRule />
    <RollupArea>
      <Rollup>
        <Scrolled>
          <Group>
            <GroupTitle $dim>连接复制</GroupTitle>
            <Check $dim><input type="checkbox" />连接</Check>
            <DistanceRow $dim>阈值距离<Num label="连接阈值距离" value="0.1" /></DistanceRow>
          </Group>
          <Group>
            <GroupTitle>端点自动焊接</GroupTitle>
            <Check><input type="checkbox" />自动焊接</Check>
            <DistanceRow>阈值距离<Num label="焊接阈值距离" value="6.0" /></DistanceRow>
          </Group>
          <Pair><PlateButton $dim>焊接</PlateButton><Num label="焊接" value="0.1" /></Pair>
          <Pair><PlateButton $dim>连接</PlateButton><PlateButton>插入</PlateButton></Pair>
          <Pair><PlateButton $dim>设为首顶点</PlateButton><PlateButton $dim>熔合</PlateButton></Pair>
          <Pair><PlateButton $dim>反转</PlateButton><PlateButton $dim>循环</PlateButton></Pair>
          {spinRows.map(([n, v]) => (
            <Pair key={n}><PlateButton $dim>{n}</PlateButton><Num label={n} value={v} /></Pair>
          ))}
          <Lower>
            <Indent><Check $dim><input type="checkbox" />中心</Check></Indent>
            <IconRow>
              <PlateButton $dim $w={62}>布尔</PlateButton>
              <ShapeButton $on aria-label="并集"><Union /></ShapeButton><ShapeButton aria-label="差集"><Union /></ShapeButton><ShapeButton aria-label="交集"><Union /></ShapeButton>
            </IconRow>
            <IconRow>
              <PlateButton $dim $w={62}>镜像</PlateButton>
              <ShapeButton $on aria-label="水平镜像" />
              <ShapeButton aria-label="垂直镜像"><svg width="16" height="14"><path d="M1 1h14v4H6L1 1zM1 13h14V9H6l-5 4z" fill="#e4e4e4" /></svg></ShapeButton>
              <ShapeButton aria-label="双向镜像"><svg width="16" height="15"><path d="M1 10l5-4 3 3-5 5zM8 4l3-3 4 5-4 3z" fill="#e4e4e4" stroke="#e4e4e4" /></svg></ShapeButton>
            </IconRow>
            <AxisCaption>以轴为中心</AxisCaption>
            <Pair><span /><PlateButton $dim>延伸</PlateButton></Pair>
          </Lower>
        </Scrolled>
      </Rollup>
      <ScrollTrack />
    </RollupArea>
  </Panel>
);

const StatusBar = () => (
  <Status>
    <Listener><div /><p>欢迎使用 MAXScr</p></Listener>
    <StatusCol $w={609} $ml={7}>
      <StatusRow>
        <StatusBox>选择了 1 个 图形</StatusBox>
        <StatusIcon $w={27} aria-label="隔离"><svg width="10" height="16"><ellipse cx="5" cy="5" rx="4" ry="5" fill="#f0a0a8" stroke="#9a3038" strokeWidth=".8" /><path d="M4 10h2v5H4z" fill="#f4e0e0" stroke="#833" strokeWidth=".5" /></svg></StatusIcon>
        <StatusIcon $w={27} aria-label="锁定"><svg width="10" height="13"><path d="M2.500 6V3.500a2.500 2.500 0 0 1 5 0V6" fill="none" stroke="#eee" strokeWidth="1.500" /><path d="M0 6h10v7H0z" fill="#f2eee0" /><path d="M4.500 8h1v3h-1z" fill="#333" /></svg></StatusIcon>
        <StatusIcon $w={27} aria-label="坐标模式"><svg width="14" height="13"><path d="M0 0h14v13H0z" fill="#e4e6ee" /><circle cx="7" cy="6.500" r="2.500" fill="none" stroke="#333" /><path d="M7 0v4M7 9v4M0 6.500h4M10 6.500h4" stroke="#333" /></svg></StatusIcon>
        <Axis>X:<Num label="X" value="790.509" w={56} h={20} /></Axis>
        <Axis>Y:<Num label="Y" value="389.955" w={56} h={20} /></Axis>
        <Axis>Z:<Num label="Z" value="0.0" w={56} h={20} /></Axis>
      </StatusRow>
      <StatusRow>
        <StatusBox>单击并拖动以选择并移动对象</StatusBox>
        <StatusIcon $w={22} $on aria-label="自适应降级"><svg width="14" height="14"><path d="M1 4l3-3h9v8l-3 4H1z" fill="#fff" /><path d="M1.500 4.500h8v8h-8zM9.500 4.500L13 1" fill="none" stroke="#333" /></svg></StatusIcon>
      </StatusRow>
    </StatusCol>
    <StatusCol $w={100} $ml={2}>
      <StatusRow><StatusBox>栅格 = 10.0</StatusBox></StatusRow>
      <StatusRow><StatusBox>添加时间标记</StatusBox></StatusRow>
    </StatusCol>
    <KeyButton aria-label="设置关键点"><svg width="26" height="12" fill="none" stroke="#0c0c0c" strokeWidth="2"><circle cx="5" cy="6" r="4" /><path d="M9 6h16M19 6v5M23 6v4" /></svg></KeyButton>
    <KeyModes>
      <PlateButton $h={21}>自动关键点</PlateButton>
      <PlateButton $h={21}>设置关键点</PlateButton>
    </KeyModes>
    <StatusCol $w={112} $ml={0}>
      <StatusRow><Picker $w={111} $h={18}><select aria-label="选定对象"><option>选定对象</option></select><Down /></Picker></StatusRow>
      <StatusRow>
        <StatusIcon $w={26} aria-label="切线"><svg width="20" height="16" fill="none"><path d="M2 14C5 14 6 3 8 3s2 8 4 8 2-8 4-9" stroke="#c84040" strokeWidth="1.500" /><path d="M2 15q3-2 4-6" stroke="#4848d0" strokeWidth="1.500" /></svg></StatusIcon>
        <button>关键点过滤器...</button>
      </StatusRow>
    </StatusCol>
    <StatusCol>
      <StatusRow />
      <StatusRow $end>
        <StatusIcon $w={32} aria-label="关键点模式"><svg width="18" height="10"><path d="M1 0v10M17 0v10" stroke="#eee" strokeWidth="1.500" /><path d="M8 1v8L3 5zM10 1v8l5-4z" fill="#eee" /></svg></StatusIcon>
        <Num label="当前帧" value="0" w={60} h={20} />
      </StatusRow>
    </StatusCol>
    <NavTools>
      <span /><span />
      <svg width="15" height="15"><path d="M1 1h6v6H1zM8 1h6v6H8zM1 8h6v6H1z" fill="#e4e4e4" /><circle cx="10" cy="10" r="3" fill="#999" stroke="#eee" /><path d="M12 12l3 3" stroke="#eee" strokeWidth="2" /></svg>
      <svg width="18" height="17"><path d="M1 5V1h4M13 1h4v4M1 12v4h4M13 16h4v-4" fill="none" stroke="#eee" /><path d="M5 7l2-2h6v6l-2 2H5z" fill="#6fae5c" stroke="#cfe8c4" /></svg>
      <svg width="18" height="17"><path d="M6 1h5v6H6zM12 1h5v6h-5zM12 8h5v5h-5z" fill="#e4e4e4" /><path d="M1 9l2-2h7v6l-2 3H1z" fill="#6fae5c" stroke="#cfe8c4" /></svg>
      <svg width="16" height="15"><path d="M0 1h10v12H0z" fill="#eee" /><path d="M1 2h5v5H1z" fill="#2c5fa6" /><path d="M7 2h2v5H7zM1 9h5v3H1z" fill="#345" /><circle cx="11" cy="10" r="4" fill="#f6f6f6" stroke="#333" /><path d="M11 7v3h2" stroke="#333" fill="none" /></svg>
      <svg width="15" height="14"><path d="M1 1h11v11H1z" fill="none" stroke="#eee" strokeDasharray="2 1" /><circle cx="11" cy="10" r="3" fill="#bbb" /></svg>
      <svg width="16" height="16"><path d="M3 6l3 4V2h1l1 6V1h1l1 7 1-6h1v7l2-3 1 1-3 8H6L2 8z" fill="#f4f4f4" /></svg>
      <svg width="17" height="15" fill="none"><path d="M3 12q-2-6 6-9l5 4M5 13q6 2 10-3" stroke="#eee" strokeWidth="1.500" /><path d="M5 10l4-6 4 6z" fill="#6fae5c" stroke="#cfe8c4" /></svg>
      <svg width="14" height="14"><path d="M0 0h13v13H0z" fill="#eee" /><path d="M3 8V3h5M3 3l7 7" stroke="#222" strokeWidth="1.500" fill="none" /></svg>
    </NavTools>
  </Status>
);

export default function Root() {
  return (
    <App>
      <Global />
      <HeaderBar />
      <MainToolbar />
      <Ribbon>
        <Grip $h={39} />
        <RibbonBody>
          <RibbonTabs>
            <RibbonTab $w={151} $on>Graphite 建模工具</RibbonTab>
            <RibbonTab $w={104}>自由形式</RibbonTab>
            <RibbonTab $w={72}>选择</RibbonTab>
            <RibbonTab $w={104}>对象绘制</RibbonTab>
            <RibbonMin aria-label="最小化功能区"><svg width="26" height="8"><rect x="0" y="0" width="14" height="7" rx="1.500" fill="#ececec" /><path d="M4 2h6L7 5z" fill="#333" /><path d="M19 3h5l-2.500 3z" fill="#bbb" /></svg></RibbonMin>
          </RibbonTabs>
          <RibbonPanelButton>多边形建模</RibbonPanelButton>
        </RibbonBody>
      </Ribbon>
      <Body>
        <Stage>
          <ViewportArea />
          <TimeArea />
        </Stage>
        <CommandPanel />
      </Body>
      <StatusBar />
      <Markup width="340" height="300" fill="none" stroke="#ff0000" strokeWidth="4" strokeLinecap="round">
        <rect x="188" y="9" width="28" height="34" strokeLinecap="butt" />
        <rect x="167" y="95" width="80" height="34" />
        <path d="M9 124L179 40M159 38l20 2-12 16" />
        <path d="M36 292L175 130M156 136l19-6-4 20" />
      </Markup>
      <Watermark>
        <svg width="48" height="50" viewBox="0 0 48 50" fill="none" stroke="#dcdee4" strokeWidth="4" strokeLinecap="round">
          <path d="M12 36V8q0-7 7-5l21 12q9 8 0 17L19 45q-15 7-16-7V14q0-5 2-7" />
          <path d="M12 36q0 4 5 2" />
          <path d="M20 20l8 5-8 5z" fill="#dcdee4" strokeWidth="1" />
          <path d="M32 20v10" strokeWidth="1.500" />
        </svg>
        <div><Brand>溜溜自学</Brand><Site>zixue.3D66.COM</Site></div>
      </Watermark>
    </App>
  );
}
